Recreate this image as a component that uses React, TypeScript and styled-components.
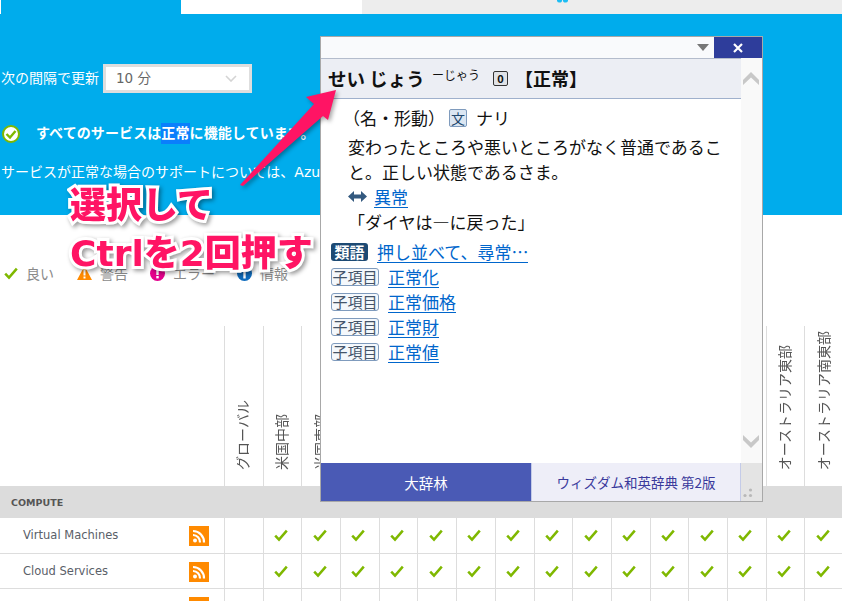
import React from 'react';
import styled, { createGlobalStyle } from 'styled-components';

const GlobalStyle = createGlobalStyle`
  html, body {
    margin: 0;
    padding: 0;
    background: #ffffff;
    overflow: hidden;
  }
  body {
    font-family: "DejaVu Sans", "Noto Sans CJK JP", sans-serif;
  }
`;

const Page = styled.div`
  position: relative;
  width: 842px;
  height: 601px;
  overflow: hidden;
`;

const TopTabs = styled.div`
  display: grid;
  grid-template-columns: 1px 180px 181px 1fr;
  height: 14px;
`;

const TopTab = styled.div<{ $bg: string }>`
  background: ${p => p.$bg};
`;

const TabDots = styled.svg`
  display: block;
  margin-left: 195px;
`;

const Hero = styled.section`
  height: 201px;
  box-sizing: border-box;
  background: #00acec;
  color: #ffffff;
  padding: 50px 0 0 1px;
  font-size: 14px;
`;

const RefreshRow = styled.div`
  display: flex;
  align-items: center;
  gap: 4px;
  height: 29px;
`;

const Raised = styled.span`
  padding-bottom: 4px;
`;

const Select = styled.div`
  width: 149px;
  height: 29px;
  box-sizing: border-box;
  border: 3px solid #dedede;
  background: #ffffff;
  color: #666666;
  display: flex;
  align-items: center;
  justify-content: space-between;
  padding: 0 12px 0 10px;
  font-size: 13.5px;
`;

const StatusRow = styled.div`
  display: flex;
  align-items: center;
  margin: 27px 0 0 1px;
  height: 28px;
  font-weight: 700;
  white-space: nowrap;
  gap: 16px;
`;

const StatusText = styled.span`
  line-height: 21px;
  margin-top: -2px;
  letter-spacing: 0.1px;
`;

const Selected = styled.span`
  display: inline-block;
  height: 21px;
  background: #0a7ffc;
`;

const SupportLine = styled.div`
  margin-top: 13px;
  height: 22px;
  line-height: 22px;
  white-space: nowrap;
`;

const Legend = styled.div`
  height: 111px;
  box-sizing: border-box;
  padding: 48px 0 0 4px;
  display: flex;
  color: #8a8a8a;
  font-size: 14px;
`;

const LegendItem = styled.div<{ $w: number }>`
  width: ${p => p.$w}px;
  height: 20px;
  display: flex;
  align-items: center;
  gap: 8px;
`;

const Table = styled.div`
  display: flex;
  flex-direction: column;
`;

const HeadRow = styled.div`
  display: grid;
  grid-template-columns: 224px repeat(16, 38.7px);
  height: 160px;
`;

const HeadCell = styled.div`
  border-left: 1px solid #dddddd;
  display: flex;
  justify-content: center;
  align-items: flex-end;
  padding: 0 3px 16px 0;
  overflow: hidden;
`;

const VerticalLabel = styled.span`
  writing-mode: vertical-rl;
  text-orientation: sideways;
  transform: rotate(180deg);
  font-family: "Noto Sans CJK JP", sans-serif;
  font-size: 14px;
  line-height: 18px;
  color: #555555;
  white-space: nowrap;
`;

const GroupRow = styled.div`
  height: 32px;
  background: #dcdcdc;
  color: #555555;
  display: flex;
  align-items: center;
  padding-left: 11px;
  font-size: 9.5px;
  font-weight: 700;
`;

const Row = styled.div`
  display: grid;
  grid-template-columns: 224px repeat(16, 38.7px);
  height: 35.7px;
  box-sizing: border-box;
  border-bottom: 1px solid #dddddd;
`;

const NameCell = styled.div`
  display: flex;
  align-items: flex-start;
  justify-content: space-between;
  padding: 8px 15px 0 23px;
  font-size: 11.5px;
  line-height: 18px;
  color: #5a6068;
`;

const Cell = styled.div`
  border-left: 1px solid #dddddd;
  display: flex;
  align-items: center;
  justify-content: center;
  padding: 1px 3px 0 0;
`;

const Popup = styled.aside`
  position: absolute;
  left: 320px;
  top: 36px;
  width: 443px;
  height: 466px;
  box-sizing: border-box;
  border: 1px solid #a8a8a8;
  background: #ffffff;
  display: flex;
  flex-direction: column;
  font-family: "Noto Sans CJK JP", sans-serif;
  color: #111111;
`;

const PopupBar = styled.div`
  height: 21px;
  background: #f9fafc;
  display: flex;
  justify-content: flex-end;
  align-items: stretch;
  flex-shrink: 0;
`;

const MenuCaret = styled.div`
  width: 0;
  height: 0;
  margin: 7px 5px 0 0;
  border-left: 6px solid transparent;
  border-right: 6px solid transparent;
  border-top: 7px solid #777777;
`;

const CloseButton = styled.div`
  width: 48px;
  background: #2e3d9b;
  display: flex;
  align-items: center;
  justify-content: center;
`;

const PopupMain = styled.div`
  flex: 1;
  display: grid;
  grid-template-columns: 1fr 21px;
  min-height: 0;
`;

const Entry = styled.div`
  display: flex;
  flex-direction: column;
  min-width: 0;
`;

const EntryHead = styled.header`
  height: 41px;
  box-sizing: border-box;
  background: #eceef4;
  border-top: 1px solid #b4bccc;
  border-bottom: 1px solid #9fb0cc;
  display: flex;
  align-items: center;
  padding: 0 0 2px 7px;
  white-space: nowrap;
`;

const Reading = styled.span`
  font-size: 18.5px;
  font-weight: 700;
  width: 104px;
`;

const OldReading = styled.span`
  font-size: 12px;
  width: 61px;
  position: relative;
  top: -3px;
`;

const AccentBox = styled.span`
  width: 13px;
  height: 13px;
  border: 1px solid #333333;
  border-radius: 2px;
  background: #e0e2e6;
  font-size: 11px;
  font-weight: 700;
  line-height: 13px;
  text-align: center;
  margin: 2px 7px 0 0;
`;

const Headword = styled.span`
  font-size: 18px;
  font-weight: 700;
`;

const EntryBody = styled.div`
  padding: 6px 0 0 10px;
  font-size: 17px;
  line-height: 25px;
`;

const Line = styled.div<{ $indent?: number }>`
  display: flex;
  align-items: center;
  height: 25px;
  padding-left: ${p => p.$indent ?? 17}px;
  white-space: nowrap;
`;

const PosLine = styled(Line)`
  margin-bottom: 4px;
`;

const BunBadge = styled.span`
  width: 16px;
  height: 16px;
  border: 1px solid #7f9bbd;
  border-radius: 2px;
  background: #dbe6f2;
  color: #23486e;
  font-size: 14px;
  line-height: 16px;
  text-align: center;
  margin: 0 9px 0 4px;
`;

const Definition = styled.p`
  margin: 0;
  padding-left: 17px;
  width: 376px;
`;

const EntryLink = styled.a`
  color: #0066cc;
  text-decoration: none;
  border-bottom: 1px solid #0066cc;
  line-height: 21px;
  height: 21px;
  display: inline-block;
`;

const OppositeMark = styled.svg`
  margin: 0 7px 0 0;
`;

const RelatedList = styled.div`
  margin-top: 5px;
`;

const DarkTag = styled.span`
  width: 37px;
  height: 18px;
  border-radius: 3px;
  background: #1d4a74;
  color: #ffffff;
  font-size: 15px;
  font-weight: 700;
  line-height: 18px;
  text-align: center;
  margin-right: 9px;
`;

const OutlineTag = styled.span`
  width: 46px;
  height: 16px;
  border: 1px solid #7f9bbd;
  border-radius: 3px;
  background: #f4f8fc;
  color: #45556a;
  font-size: 15px;
  line-height: 16px;
  text-align: center;
  margin-right: 9px;
`;

const Scrollbar = styled.div`
  background: #f9f9f9;
  display: flex;
  flex-direction: column;
  justify-content: space-between;
  align-items: center;
  padding: 14px 2px 15px 0;
`;

const PopupTabs = styled.div`
  height: 38px;
  flex-shrink: 0;
  display: grid;
  grid-template-columns: 210px 209px 1fr;
`;

const DictTab = styled.div<{ $active?: boolean }>`
  background: ${p => (p.$active ? '#4a5ab5' : '#eeeef8')};
  color: ${p => (p.$active ? '#ffffff' : '#3a3a9c')};
  border-left: ${p => (p.$active ? '0' : '1px solid #c4cbe8')};
  font-size: ${p => (p.$active ? 14.5 : 13.5)}px;
  display: flex;
  align-items: center;
  justify-content: center;
`;

const Grip = styled.div`
  background: #e4e4e4;
  border-left: 1px solid #c4cbe8;
  display: flex;
  align-items: flex-end;
  justify-content: flex-end;
  padding: 0 9px 3px 0;
`;

const Arrow = styled.svg`
  position: absolute;
  left: 0;
  top: 0;
  filter: drop-shadow(2px 2px 2px rgba(0, 0, 0, 0.35));
`;

const Callout = styled.div`
  position: absolute;
  left: 70px;
  top: 182px;
  font-family: "DejaVu Sans", "Noto Sans CJK JP", sans-serif;
  font-size: 36px;
  font-weight: 900;
  line-height: 48px;
  color: #ff1464;
  -webkit-text-stroke: 6px #ffffff;
  paint-order: stroke fill;
  filter: drop-shadow(2px 2px 2px rgba(0, 0, 0, 0.4));
  white-space: nowrap;
`;

const Check: React.FC = () => (
  <svg width="14" height="13" viewBox="0 0 14 13">
    <path d="M1.2 6.6 L5 10.6 L12.8 1.6" fill="none" stroke="#7fb800" strokeWidth="2.5" />
  </svg>
);

const Rss: React.FC = () => (
  <svg width="20" height="20" viewBox="0 0 20 20">
    <rect width="20" height="20" fill="#ff8a00" />
    <circle cx="6" cy="14.6" r="2" fill="#fff" />
    <path d="M4 9 A7 7 0 0 1 11 16.5" fill="none" stroke="#fff" strokeWidth="2.2" />
    <path d="M4 5 A11 11 0 0 1 15 16.5" fill="none" stroke="#fff" strokeWidth="2.2" />
  </svg>
);

const regions = [
  'グローバル', '米国中部', '米国東部', '米国東部2', '米国中北部', '米国中南部', '米国西部', '欧州北部',
  '欧州西部', 'アジア東部', 'アジア南東部', '日本東部', '日本西部', 'ブラジル南部', 'オーストラリア東部',
  'オーストラリア南東部',
];

const services = ['Virtual Machines', 'Cloud Services', ''];
const children = ['正常化', '正常価格', '正常財', '正常値'];

const App: React.FC = () => (
  <>
    <GlobalStyle />
    <Page>
      <TopTabs>
        <TopTab $bg="#ffffff" />
        <TopTab $bg="#00acec" />
        <TopTab $bg="#ffffff" />
        <TopTab $bg="#ededed">
          <TabDots width="11" height="3" viewBox="0 0 11 3">
            <circle cx="2.5" cy="0" r="2.6" fill="#1cbdf4" />
            <circle cx="8.5" cy="0" r="2.6" fill="#1cbdf4" />
          </TabDots>
        </TopTab>
      </TopTabs>
      <Hero>
        <RefreshRow>
          <Raised>次の間隔で更新</Raised>
          <Select>
            <Raised>10 分</Raised>
            <svg width="12" height="7" viewBox="0 0 12 7">
              <path d="M1 1 L6 6 L11 1" fill="none" stroke="#d4d4d4" strokeWidth="1.6" />
            </svg>
          </Select>
        </RefreshRow>
        <StatusRow>
          <svg width="18" height="18" viewBox="0 0 18 18">
            <circle cx="9" cy="9" r="8" fill="#ffffff" stroke="#7fb800" strokeWidth="2" />
            <path d="M4.5 9 L8 12.5 L13.5 6" fill="none" stroke="#7fb800" strokeWidth="2.4" />
          </svg>
          <StatusText>
            すべてのサービスは<Selected>正常</Selected>に機能しています。
          </StatusText>
        </StatusRow>
        <SupportLine>サービスが正常な場合のサポートについては、Azure サポートにお問い合わせください。</SupportLine>
      </Hero>
      <Legend>
        <LegendItem $w={73}>
          <Check />
          良い
        </LegendItem>
        <LegendItem $w={73}>
          <svg width="15" height="14" viewBox="0 0 15 14">
            <path d="M7.5 0 L15 14 L0 14 Z" fill="#ff8a00" />
            <rect x="6.5" y="4" width="2" height="5.5" fill="#fff" />
            <rect x="6.5" y="10.5" width="2" height="2" fill="#fff" />
          </svg>
          警告
        </LegendItem>
        <LegendItem $w={87}>
          <svg width="15" height="15" viewBox="0 0 15 15">
            <circle cx="7.5" cy="7.5" r="7.5" fill="#e4008c" />
            <rect x="6.3" y="2.5" width="2.4" height="6.5" fill="#fff" />
            <rect x="6.3" y="10" width="2.4" height="2.4" fill="#fff" />
          </svg>
          エラー
        </LegendItem>
        <LegendItem $w={70}>
          <svg width="15" height="15" viewBox="0 0 15 15">
            <circle cx="7.5" cy="7.5" r="7.5" fill="#0f6cbd" />
            <rect x="6.3" y="2.5" width="2.4" height="2.4" fill="#fff" />
            <rect x="6.3" y="6" width="2.4" height="6.5" fill="#fff" />
          </svg>
          情報
        </LegendItem>
      </Legend>
      <Table>
        <HeadRow>
          <div />
          {regions.map(r => (
            <HeadCell key={r}>
              <VerticalLabel>{r}</VerticalLabel>
            </HeadCell>
          ))}
        </HeadRow>
        <GroupRow>COMPUTE</GroupRow>
        {services.map((s, i) => (
          <Row key={i}>
            <NameCell>
              <span>{s}</span>
              <Rss />
            </NameCell>
            {regions.map((r, j) => (
              <Cell key={r}>{j > 0 && s && <Check />}</Cell>
            ))}
          </Row>
        ))}
      </Table>
      <Popup>
        <PopupBar>
          <MenuCaret />
          <CloseButton>
            <svg width="10" height="10" viewBox="0 0 10 10">
              <path d="M1 1 L9 9 M9 1 L1 9" stroke="#ffffff" strokeWidth="2.2" />
            </svg>
          </CloseButton>
        </PopupBar>
        <PopupMain>
          <Entry>
            <EntryHead>
              <Reading>せい じょう</Reading>
              <OldReading>ーじゃう</OldReading>
              <AccentBox>0</AccentBox>
              <Headword>【正常】</Headword>
            </EntryHead>
            <EntryBody>
              <PosLine $indent={12}>
                （名・形動）
                <BunBadge>文</BunBadge>
                ナリ
              </PosLine>
              <Definition>変わったところや悪いところがなく普通であること。正しい状態であるさま。</Definition>
              <Line>
                <OppositeMark width="19" height="11" viewBox="0 0 19 11">
                  <path d="M0 5.5 L6 0 L6 3.5 L13 3.5 L13 0 L19 5.5 L13 11 L13 7.5 L6 7.5 L6 11 Z" fill="#33597f" />
                </OppositeMark>
                <EntryLink>異常</EntryLink>
              </Line>
              <Line $indent={17}>「ダイヤは―に戻った」</Line>
              <RelatedList>
                <Line $indent={0}>
                  <DarkTag>類語</DarkTag>
                  <EntryLink>押し並べて、尋常…</EntryLink>
                </Line>
                {children.map(c => (
                  <Line key={c} $indent={0}>
                    <OutlineTag>子項目</OutlineTag>
                    <EntryLink>{c}</EntryLink>
                  </Line>
                ))}
              </RelatedList>
            </EntryBody>
          </Entry>
          <Scrollbar>
            <svg width="16" height="13" viewBox="0 0 16 13">
              <path d="M0 8 L8 0 L16 8 L16 13 L8 5.5 L0 13 Z" fill="#c8c8c8" />
            </svg>
            <svg width="16" height="13" viewBox="0 0 16 13">
              <path d="M0 0 L8 7.5 L16 0 L16 5 L8 13 L0 5 Z" fill="#c8c8c8" />
            </svg>
          </Scrollbar>
        </PopupMain>
        <PopupTabs>
          <DictTab $active>大辞林</DictTab>
          <DictTab>ウィズダム和英辞典 第2版</DictTab>
          <Grip>
            <svg width="10" height="10" viewBox="0 0 10 10">
              <circle cx="7.5" cy="2" r="1.6" fill="#b8b8b8" />
              <circle cx="2" cy="7.5" r="1.6" fill="#b8b8b8" />
              <circle cx="7.5" cy="7.5" r="1.6" fill="#b8b8b8" />
            </svg>
          </Grip>
        </PopupTabs>
      </Popup>
      <Arrow width="842" height="601" viewBox="0 0 842 601">
        <path d="M240 185 L314 104 L306 97 L336 90 L328 120 L323 116 L243 186 Z" fill="#ff1464" />
      </Arrow>
      <Callout>
        選択して
        <br />
        Ctrlを2回押す
      </Callout>
    </Page>
  </>
);

export default App;
